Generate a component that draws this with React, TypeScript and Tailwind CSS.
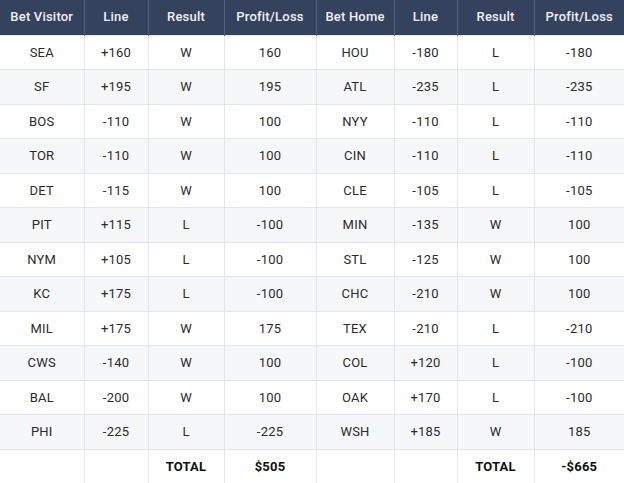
import React from "react";

type Row = [string, string, string, string, string, string, string, string];

const rows: Row[] = [
  ["SEA", "+160", "W", "160", "HOU", "-180", "L", "-180"],
  ["SF", "+195", "W", "195", "ATL", "-235", "L", "-235"],
  ["BOS", "-110", "W", "100", "NYY", "-110", "L", "-110"],
  ["TOR", "-110", "W", "100", "CIN", "-110", "L", "-110"],
  ["DET", "-115", "W", "100", "CLE", "-105", "L", "-105"],
  ["PIT", "+115", "L", "-100", "MIN", "-135", "W", "100"],
  ["NYM", "+105", "L", "-100", "STL", "-125", "W", "100"],
  ["KC", "+175", "L", "-100", "CHC", "-210", "W", "100"],
  ["MIL", "+175", "W", "175", "TEX", "-210", "L", "-210"],
  ["CWS", "-140", "W", "100", "COL", "+120", "L", "-100"],
  ["BAL", "-200", "W", "100", "OAK", "+170", "L", "-100"],
  ["PHI", "-225", "L", "-225", "WSH", "+185", "W", "185"],
];

const headers = [
  "Bet Visitor",
  "Line",
  "Result",
  "Profit/Loss",
  "Bet Home",
  "Line",
  "Result",
  "Profit/Loss",
];

const widths = [84, 64, 76, 92, 78, 63, 77, 90];

export default function App() {
  return (
    <div className="w-[624px] h-[483px] overflow-hidden bg-white font-['Roboto',sans-serif]">
      <table className="w-[624px] table-fixed border-collapse text-center text-[13px] tracking-[0.2px]">
        <colgroup>
          {widths.map((w, i) => (
            <col key={i} style={{ width: w }} />
          ))}
        </colgroup>
        <thead>
          <tr className="h-[35px] bg-[#35425e]">
            {headers.map((h, i) => (
              <th
                key={i}
                className="border-x border-[#56627b] pb-[2px] font-medium text-[#eef0f4] first:border-l-0 last:border-r-0"
              >
                {h}
              </th>
            ))}
          </tr>
        </thead>
        <tbody>
          {rows.map((r, i) => (
            <tr
              key={i}
              className={`h-[34.5px] ${i % 2 === 1 ? "bg-[#f6f7f9]" : "bg-white"}`}
            >
              {r.map((c, j) => (
                <td
                  key={j}
                  className="border border-[#e4e6eb] text-[#2b2b2b] first:border-l-0 last:border-r-0"
                >
                  {c}
                </td>
              ))}
            </tr>
          ))}
          <tr className="h-[34.5px] bg-white">
            <td className="border border-[#e4e6eb] border-l-0"></td>
            <td className="border border-[#e4e6eb]"></td>
            <td className="border border-[#e4e6eb] font-bold text-[#111]">TOTAL</td>
            <td className="border border-[#e4e6eb] font-bold text-[#111]">$505</td>
            <td className="border border-[#e4e6eb]"></td>
            <td className="border border-[#e4e6eb]"></td>
            <td className="border border-[#e4e6eb] font-bold text-[#111]">TOTAL</td>
            <td className="border border-[#e4e6eb] border-r-0 font-bold text-[#111]">-$665</td>
          </tr>
        </tbody>
      </table>
    </div>
  );
}
